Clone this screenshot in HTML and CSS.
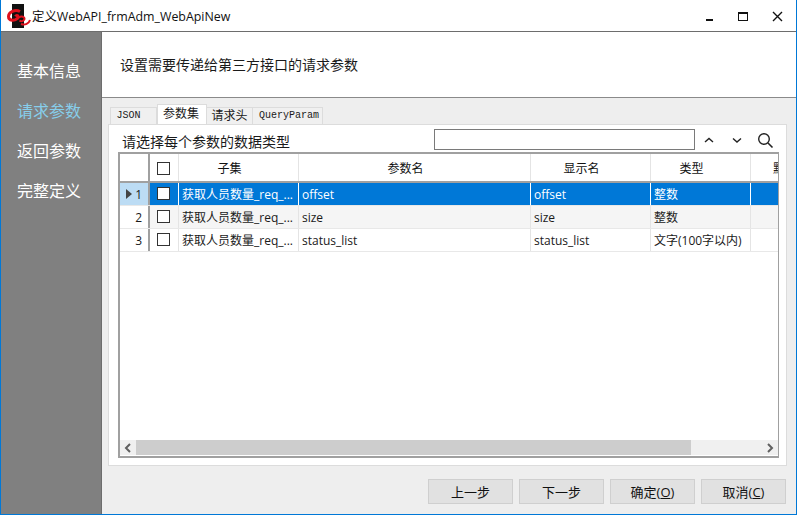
FILE: index.html
```html
<!DOCTYPE html>
<html lang="zh">
<head>
<meta charset="utf-8">
<title>定义WebAPI_frmAdm_WebApiNew</title>
<link rel="stylesheet" href="styles.css">
</head>
<body>
<div class="window">
  <header class="titlebar">
    <svg class="logo" width="24" height="25" viewBox="0 0 24 25">
      <rect x="5" y="0" width="12" height="24" fill="#111"/>
      <path d="M13 7.500C8 5 1.500 8 1.500 12.500C1.500 17 8 17.500 10.500 14C12 11.500 9.500 10.500 8.500 12.500" fill="none" stroke="#e0101c" stroke-width="3"/>
      <path d="M10 16C11 12.500 15 11.500 17 13.500C19 15.500 15 18.500 12.500 16.500M14 20C18 21.500 22 19.500 23 16" fill="none" stroke="#e0101c" stroke-width="2"/>
    </svg>
    <span class="title">定义WebAPI_frmAdm_WebApiNew</span>
    <div class="winbtns">
      <svg width="12" height="12" viewBox="0 0 12 12"><rect x="3" y="9" width="7" height="2" fill="#111"/></svg>
      <svg width="12" height="12" viewBox="0 0 12 12"><rect x="1.500" y="2.500" width="9" height="8" fill="none" stroke="#111"/><rect x="1" y="2" width="10" height="2" fill="#111"/></svg>
      <svg width="12" height="12" viewBox="0 0 12 12"><path d="M2 2L11 11M11 2L2 11" stroke="#111" stroke-width="1.400"/></svg>
    </div>
  </header>
  <div class="body">
    <nav class="sidebar">
      <a class="navitem">基本信息</a>
      <a class="navitem active">请求参数</a>
      <a class="navitem">返回参数</a>
      <a class="navitem">完整定义</a>
    </nav>
    <main class="content">
      <div class="banner">设置需要传递给第三方接口的请求参数</div>
      <div class="workarea">
        <div class="tabs">
          <span class="tab mono tab-json">JSON</span>
          <span class="tab selected">参数集</span>
          <span class="tab tab-head">请求头</span>
          <span class="tab mono tab-query">QueryParam</span>
        </div>
        <section class="panel">
          <div class="toolbar">
            <span class="hint">请选择每个参数的数据类型</span>
            <input class="search" type="text" aria-label="搜索">
            <svg class="tool" width="12" height="12" viewBox="0 0 12 12"><path d="M2 8L6 4.500L10 8" fill="none" stroke="#222" stroke-width="1.400"/></svg>
            <svg class="tool" width="12" height="12" viewBox="0 0 12 12"><path d="M2 4.500L6 8L10 4.500" fill="none" stroke="#222" stroke-width="1.400"/></svg>
            <svg class="tool" width="16" height="16" viewBox="0 0 16 16"><circle cx="6" cy="6" r="5.300" fill="none" stroke="#222" stroke-width="1.400"/><path d="M10 10L14.500 14.500" stroke="#222" stroke-width="1.600"/></svg>
          </div>
          <div class="grid">
            <div class="rows">
              <div class="row head">
                <div class="c c0"></div>
                <div class="c c1"><i class="box"></i></div>
                <div class="c c2 ctr">子集</div>
                <div class="c c3 ctr">参数名</div>
                <div class="c c4 ctr">显示名</div>
                <div class="c c5 ctr">类型</div>
                <div class="c c6 clip">默</div>
              </div>
              <div class="row current">
                <div class="c c0 rh"><svg class="arrow" width="6" height="10" viewBox="0 0 6 10"><path d="M0 0L6 5L0 10Z" fill="#444"/></svg>1</div>
                <div class="c c1"><i class="box"></i></div>
                <div class="c c2">获取人员数量_req_...</div>
                <div class="c c3">offset</div>
                <div class="c c4">offset</div>
                <div class="c c5">整数</div>
                <div class="c c6"></div>
              </div>
              <div class="row alt">
                <div class="c c0 rh">2</div>
                <div class="c c1"><i class="box"></i></div>
                <div class="c c2">获取人员数量_req_...</div>
                <div class="c c3">size</div>
                <div class="c c4">size</div>
                <div class="c c5">整数</div>
                <div class="c c6"></div>
              </div>
              <div class="row">
                <div class="c c0 rh">3</div>
                <div class="c c1"><i class="box"></i></div>
                <div class="c c2">获取人员数量_req_...</div>
                <div class="c c3">status_list</div>
                <div class="c c4">status_list</div>
                <div class="c c5">文字(100字以内)</div>
                <div class="c c6"></div>
              </div>
            </div>
            <div class="hscroll">
              <span class="sbtn first"><svg width="8" height="10" viewBox="0 0 8 10"><path d="M6 1L2 5L6 9" fill="none" stroke="#606060" stroke-width="2"/></svg></span>
              <span class="track"><span class="thumb"></span></span>
              <span class="sbtn"><svg width="8" height="10" viewBox="0 0 8 10"><path d="M2 1L6 5L2 9" fill="none" stroke="#606060" stroke-width="2"/></svg></span>
            </div>
          </div>
        </section>
        <footer class="actions">
          <button class="btn">上一步</button>
          <button class="btn">下一步</button>
          <button class="btn">确定(<u>O</u>)</button>
          <button class="btn">取消(<u>C</u>)</button>
        </footer>
      </div>
    </main>
  </div>
</div>
</body>
</html>
```
FILE: styles.css
```css
* { box-sizing: border-box; }
html, body { margin: 0; padding: 0; background: #fff; }
body {
  width: 798px;
  height: 517px;
  overflow: hidden;
  font-family: "Open Sans", "Noto Sans CJK SC", sans-serif;
  font-size: 12px;
  color: #1a1a1a;
}
.window {
  width: 797px;
  height: 515px;
  border: 1px solid #0078d7;
  border-top: 0;
  display: flex;
  flex-direction: column;
  overflow: hidden;
}
.titlebar {
  height: 32px;
  flex: none;
  display: flex;
  align-items: center;
  background: #fff;
  border-bottom: 1px solid #6d6d6d;
  padding: 0 0 0 6px;
}
.logo { margin: 1px 1px 0 0; }
.title { font-size: 12.400px; color: #111; }
.winbtns { margin-left: auto; display: flex; gap: 22px; padding-right: 13px; margin-top: 1px; }
.body { flex: 1; display: flex; min-height: 0; }
.sidebar {
  width: 100px;
  flex: none;
  background: #808080;
  padding-top: 25px;
  display: flex;
  flex-direction: column;
  gap: 12px;
}
.navitem {
  height: 28px;
  line-height: 28px;
  padding-left: 16px;
  font-size: 16px;
  color: #fff;
}
.navitem.active { color: #87ceeb; }
.content { flex: 1; display: flex; flex-direction: column; min-width: 0; border-left: 1px solid #6d6d6d; }
.banner {
  height: 66px;
  flex: none;
  background: #fff;
  border-bottom: 1px solid #8a8a8a;
  padding: 23px 0 0 18px;
  line-height: 20px;
  font-size: 14px;
}
.workarea {
  flex: 1;
  background: #eee;
  padding: 6px 9px 0 6px;
  display: flex;
  flex-direction: column;
  min-height: 0;
}
.tabs { height: 20px; flex: none; display: flex; padding-left: 2px; align-items: flex-end; }
.tab {
  height: 17px;
  line-height: 16px;
  background: #f0f0f0;
  border: 1px solid #dcdcdc;
  border-bottom: 0;
  border-left: 0;
  text-align: center;
  font-size: 12px;
  flex: none;
}
.mono { font-family: "Liberation Mono", monospace; font-size: 10px; }
.tab-json { width: 47px; padding-right: 10px; border-left: 1px solid #dcdcdc; }
.tab.selected { height: 20px; width: 50px; padding-right: 2px; background: #fff; border: 1px solid #dcdcdc; border-bottom: 0; line-height: 17px; }
.tab-head { width: 46px; }
.tab-query { width: 70px; padding-left: 3px; }
.panel {
  height: 342px;
  flex: none;
  background: #fff;
  border: 1px solid #dcdcdc;
  padding: 3px 7px 7px 9px;
  display: flex;
  flex-direction: column;
}
.toolbar { height: 23px; flex: none; display: flex; align-items: center; padding-left: 4px; }
.hint { font-size: 14px; width: 312px; margin-top: 2px; flex: none; }
.search { width: 261px; height: 21px; border: 1px solid #7a7a7a; background: #fff; padding: 0; margin: 0 8px 0 0; flex: none; }
.tool { flex: none; margin-right: 16px; }
.tool:last-child { margin: 2px 0 0 -1px; }
.grid {
  flex: 1;
  margin-top: 1px;
  border: 2px solid #a0a0a0;
  border-right-width: 1px;
  display: flex;
  flex-direction: column;
  min-height: 0;
  background: #fff;
}
.rows { flex: 1; overflow: hidden; min-height: 0; }
.row {
  display: flex;
  height: 23px;
  border-bottom: 1px solid #e8e8e8;
  background: #fff;
}
.row.head { height: 29px; border-bottom: 2px solid #a0a0a0; }
.row.alt { background: #f5f5f5; }
.row.current { background: #0078d7; color: #fff; }
.c {
  flex: none;
  padding-left: 3px;
  display: flex;
  align-items: center;
  border-right: 1px solid #e4e4e4;
  white-space: nowrap;
  overflow: hidden;
  font-size: 12px;
}
.ctr { justify-content: center; padding: 0 18px 0 0; color: #111; }
.c0 { width: 30px; justify-content: flex-end; padding-right: 6px; border-right: 2px solid #a0a0a0; background: #fff; color: #1a1a1a; }
.current .c0 { background: #bcdcf4; }
.arrow { margin-right: 3px; }
.c1 { width: 29px; justify-content: center; padding: 0 2px 0 0; }
.c2 { width: 120px; }
.c3 { width: 232px; }
.c4 { width: 120px; }
.c5 { width: 100px; }
.c6 { flex: 1; min-width: 28px; border-right: 0; }
.clip { padding-left: 22px; }
.current .c { border-right-color: #fff; }
.current .c0 { border-right-color: #a0a0a0; }
.box {
  width: 13px;
  height: 13px;
  display: block;
  margin-top: -1px;
  background: #fff;
  border: 1px solid #333;
}
.head .box { margin-top: 2px; }
.hscroll { height: 15px; flex: none; display: flex; background: #f0f0f0; margin-bottom: 1px; }
.sbtn { width: 17px; flex: none; display: flex; align-items: center; justify-content: center; }
.sbtn.first { width: 16px; }
.track { flex: 1; display: block; }
.thumb { display: block; width: 555px; height: 100%; background: #cdcdcd; }
.actions {
  flex: 1;
  display: flex;
  justify-content: flex-end;
  gap: 6px;
  padding: 13px 1px 0 0;
}
.btn {
  width: 85px;
  height: 25px;
  background: #e1e1e1;
  border: 1px solid #cfcfcf;
  padding: 0;
  font: inherit;
  font-size: 13px;
  color: #111;
}
```
